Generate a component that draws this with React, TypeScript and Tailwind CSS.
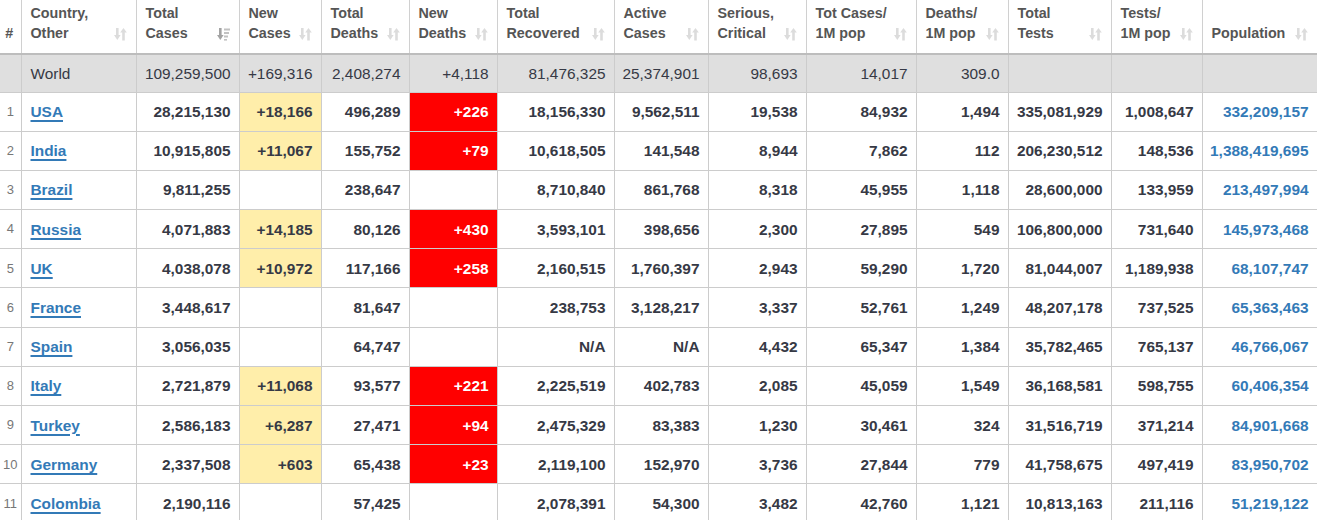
import React from "react";

type Row = {
  n: string;
  country: string;
  cells: string[];
  pop: string;
};

const widths = [21, 115, 103, 82, 88, 88, 117, 94, 98, 110, 92, 103, 91, 115];

const headers: { a: string; b?: string; active?: boolean; icon?: boolean }[] = [
  { a: "#", icon: false },
  { a: "Country,", b: "Other" },
  { a: "Total", b: "Cases", active: true },
  { a: "New", b: "Cases" },
  { a: "Total", b: "Deaths" },
  { a: "New", b: "Deaths" },
  { a: "Total", b: "Recovered" },
  { a: "Active", b: "Cases" },
  { a: "Serious,", b: "Critical" },
  { a: "Tot Cases/", b: "1M pop" },
  { a: "Deaths/", b: "1M pop" },
  { a: "Total", b: "Tests" },
  { a: "Tests/", b: "1M pop" },
  { a: "Population" },
];

const world = [
  "109,259,500", "+169,316", "2,408,274", "+4,118", "81,476,325", "25,374,901",
  "98,693", "14,017", "309.0", "", "", "",
];

const rows: Row[] = [
  { n: "1", country: "USA", cells: ["28,215,130", "+18,166", "496,289", "+226", "18,156,330", "9,562,511", "19,538", "84,932", "1,494", "335,081,929", "1,008,647"], pop: "332,209,157" },
  { n: "2", country: "India", cells: ["10,915,805", "+11,067", "155,752", "+79", "10,618,505", "141,548", "8,944", "7,862", "112", "206,230,512", "148,536"], pop: "1,388,419,695" },
  { n: "3", country: "Brazil", cells: ["9,811,255", "", "238,647", "", "8,710,840", "861,768", "8,318", "45,955", "1,118", "28,600,000", "133,959"], pop: "213,497,994" },
  { n: "4", country: "Russia", cells: ["4,071,883", "+14,185", "80,126", "+430", "3,593,101", "398,656", "2,300", "27,895", "549", "106,800,000", "731,640"], pop: "145,973,468" },
  { n: "5", country: "UK", cells: ["4,038,078", "+10,972", "117,166", "+258", "2,160,515", "1,760,397", "2,943", "59,290", "1,720", "81,044,007", "1,189,938"], pop: "68,107,747" },
  { n: "6", country: "France", cells: ["3,448,617", "", "81,647", "", "238,753", "3,128,217", "3,337", "52,761", "1,249", "48,207,178", "737,525"], pop: "65,363,463" },
  { n: "7", country: "Spain", cells: ["3,056,035", "", "64,747", "", "N/A", "N/A", "4,432", "65,347", "1,384", "35,782,465", "765,137"], pop: "46,766,067" },
  { n: "8", country: "Italy", cells: ["2,721,879", "+11,068", "93,577", "+221", "2,225,519", "402,783", "2,085", "45,059", "1,549", "36,168,581", "598,755"], pop: "60,406,354" },
  { n: "9", country: "Turkey", cells: ["2,586,183", "+6,287", "27,471", "+94", "2,475,329", "83,383", "1,230", "30,461", "324", "31,516,719", "371,214"], pop: "84,901,668" },
  { n: "10", country: "Germany", cells: ["2,337,508", "+603", "65,438", "+23", "2,119,100", "152,970", "3,736", "27,844", "779", "41,758,675", "497,419"], pop: "83,950,702" },
  { n: "11", country: "Colombia", cells: ["2,190,116", "", "57,425", "", "2,078,391", "54,300", "3,482", "42,760", "1,121", "10,813,163", "211,116"], pop: "51,219,122" },
];

function SortIcon({ active }: { active?: boolean }) {
  if (active) {
    return (
      <svg width="13" height="14" viewBox="0 0 13 14" className="shrink-0 mb-[2px]">
        <rect x="2" y="1" width="2.6" height="8" fill="#a3a3a3" />
        <polygon points="0,8 6.6,8 3.3,13" fill="#a3a3a3" />
        <rect x="7" y="1.5" width="6" height="2" fill="#c2c2c2" />
        <rect x="7" y="5" width="5" height="2" fill="#c2c2c2" />
        <rect x="7" y="8.5" width="4" height="2" fill="#c2c2c2" />
        <rect x="7" y="12" width="3" height="1.6" fill="#c2c2c2" />
      </svg>
    );
  }
  return (
    <svg width="13" height="14" viewBox="0 0 13 14" className="shrink-0 mb-[2px]">
      <rect x="2" y="1" width="2.6" height="8" fill="#dcdcdc" />
      <polygon points="0,8 6.6,8 3.3,13" fill="#dcdcdc" />
      <polygon points="6.2,5.5 12.8,5.5 9.5,1" fill="#dcdcdc" />
      <rect x="8.2" y="5" width="2.6" height="8.5" fill="#dcdcdc" />
    </svg>
  );
}

const font = "font-['Liberation_Sans',Arial,sans-serif]";

export default function App() {
  return (
    <div className={`w-[1317px] h-[520px] overflow-hidden bg-white ${font}`}>
      <table className="w-[1317px] table-fixed border-collapse">
        <colgroup>
          {widths.map((w, i) => (
            <col key={i} style={{ width: w }} />
          ))}
        </colgroup>
        <thead>
          <tr>
            {headers.map((h, i) => (
              <th
                key={i}
                className={`h-[54px] align-bottom border-x border-[#d0d0d0] border-b-2 border-b-[#bdbdbd] pb-[10px] text-left font-bold text-[14.3px] leading-[20px] text-[#555555] ${
                  i === 0 ? "px-0 border-l-0" : "pl-[9px] pr-[9px]"
                }`}
              >
                {i === 0 ? (
                  <div className="text-center pr-[2px]">#</div>
                ) : (
                  <div className="flex items-end justify-between gap-1">
                    <div>
                      {h.b ? (
                        <>
                          <div>{h.a}</div>
                          <div>{h.b}</div>
                        </>
                      ) : (
                        <div>{h.a}</div>
                      )}
                    </div>
                    <SortIcon active={h.active} />
                  </div>
                )}
              </th>
            ))}
          </tr>
        </thead>
        <tbody>
          <tr className="bg-[#dfdfdf] text-[15.4px] text-[#363945]">
            <td className="h-[38px] border-r border-b border-[#cccccc]" />
            <td className="border-x border-b border-[#cccccc] pl-[9px] text-left">World</td>
            {world.map((v, i) => (
              <td key={i} className="border-x border-b border-[#cccccc] pr-[8px] text-right whitespace-nowrap">
                {v}
              </td>
            ))}
          </tr>
          {rows.map((r) => (
            <tr key={r.n} className="text-[15.4px] font-bold text-[#363945]">
              <td className="h-[39.2px] border-r border-b border-[#cccccc] text-center font-normal text-[13px] text-[#777]">
                {r.n}
              </td>
              <td className="border-x border-b border-[#cccccc] pl-[9px] text-left">
                <a href="#" className="text-[#337ab7] underline underline-offset-[3px] decoration-2">
                  {r.country}
                </a>
              </td>
              {r.cells.map((v, i) => {
                let bg = "";
                if (i === 1 && v) bg = "bg-[#ffeeaa]";
                if (i === 3 && v) bg = "bg-[#ff0000] text-white";
                return (
                  <td
                    key={i}
                    className={`border-x border-b border-[#cccccc] pr-[8px] text-right whitespace-nowrap ${bg}`}
                  >
                    {v}
                  </td>
                );
              })}
              <td className="border-x border-b border-[#cccccc] pr-[8px] text-right whitespace-nowrap text-[#337ab7]">
                {r.pop}
              </td>
            </tr>
          ))}
        </tbody>
      </table>
    </div>
  );
}
